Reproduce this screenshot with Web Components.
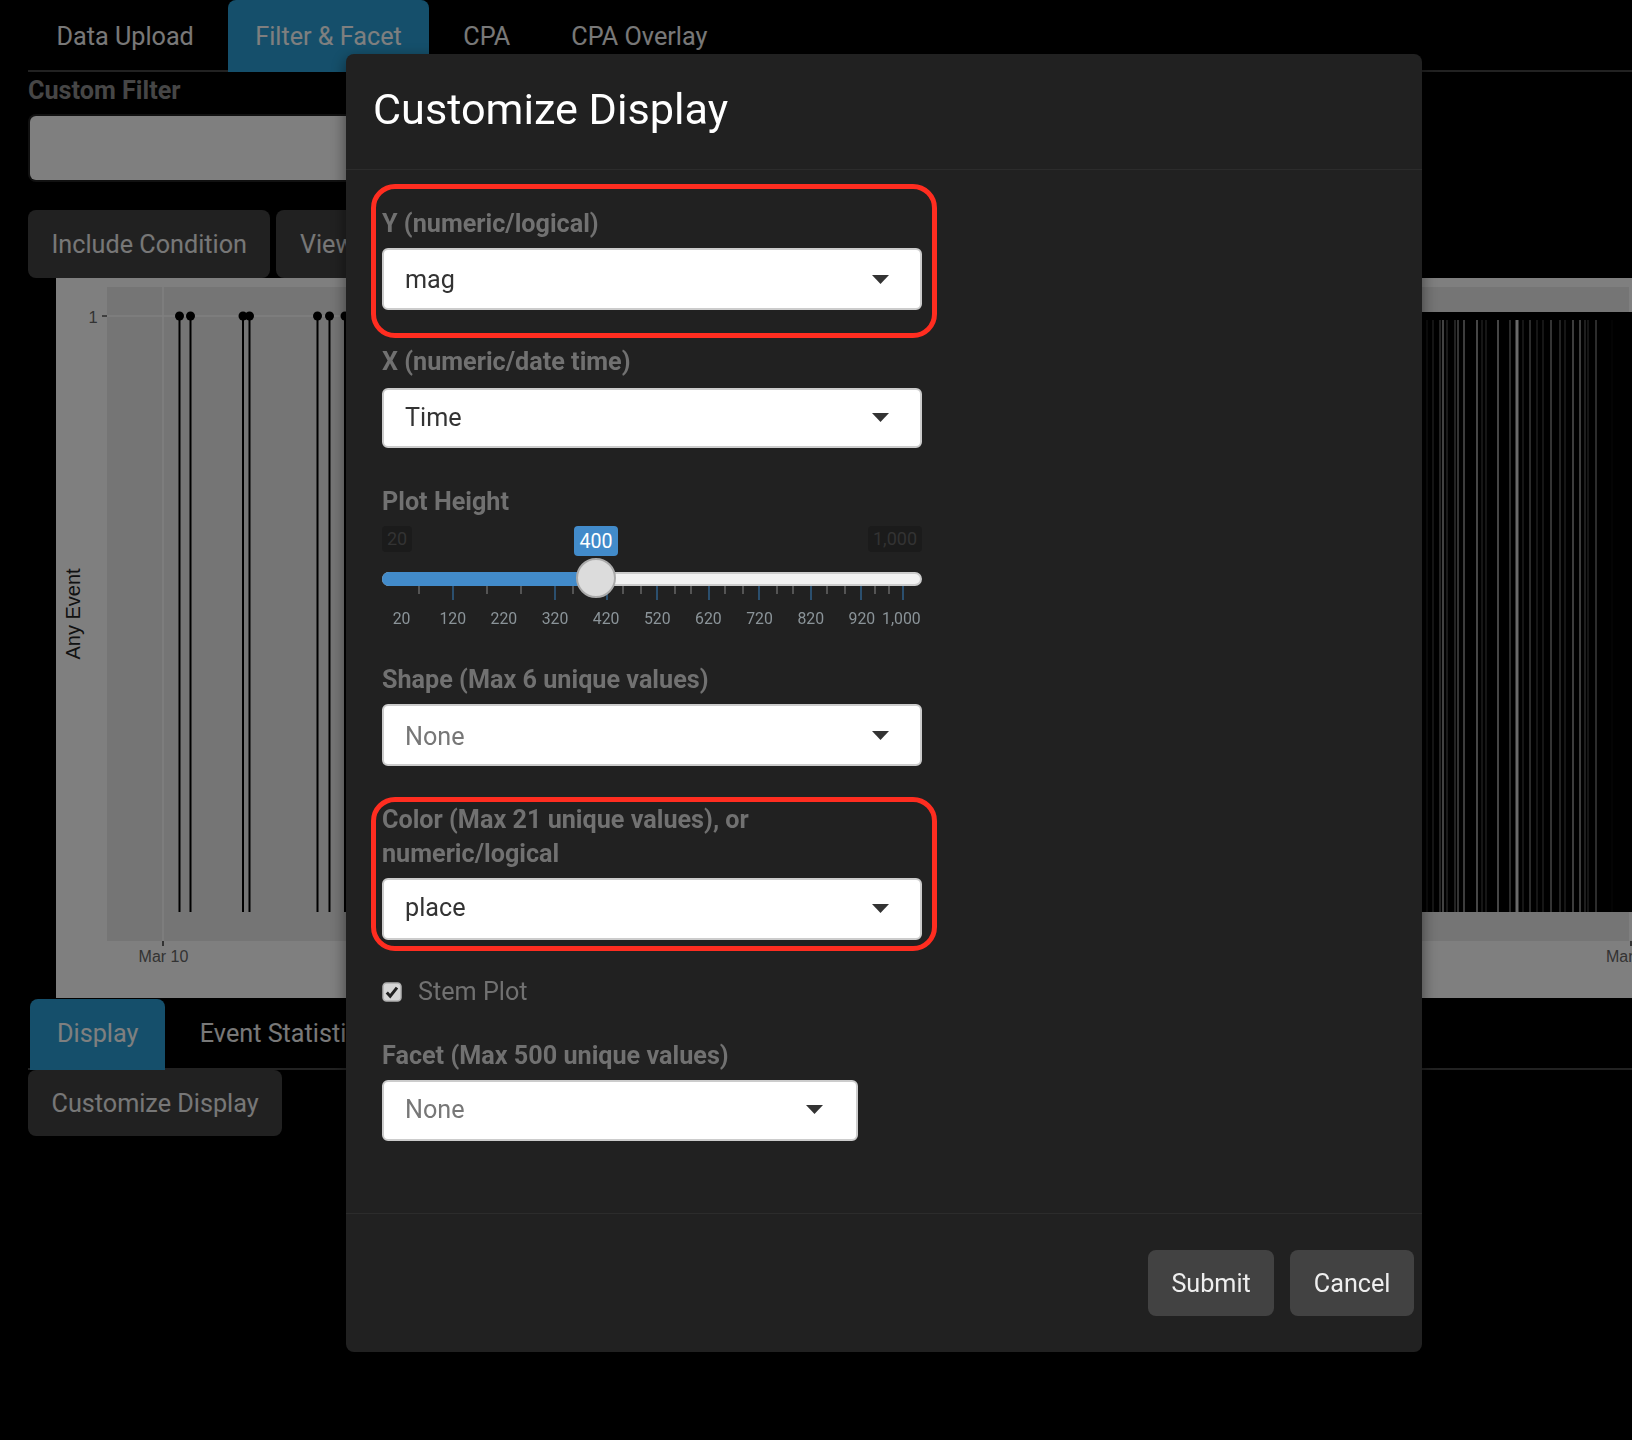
<!DOCTYPE html>
<html>
<head>
<meta charset="utf-8">
<title>Customize Display</title>
<style>
  html, body { margin: 0; height: 1440px; background: #000; overflow: hidden; }
  body { font-family: Roboto, "Liberation Sans", sans-serif; font-size: 25.2px; color: #eee; }
</style>
</head>
<body>
  <tab-bar>
    <tab-item>Data Upload</tab-item>
    <tab-item active>Filter &amp; Facet</tab-item>
    <tab-item>CPA</tab-item>
    <tab-item style="margin-left:-2px">CPA Overlay</tab-item>
  </tab-bar>
  <filter-box>Custom Filter</filter-box>
  <button-row style="--btn-h:68px;--btn-lh:70px">
    <dark-button>Include Condition</dark-button>
    <dark-button>View</dark-button>
  </button-row>
  <plot-panel></plot-panel>
  <tab-bar class="lower">
    <tab-item active>Display</tab-item>
    <tab-item>Event Statistics</tab-item>
  </tab-bar>
  <button-row><dark-button>Customize Display</dark-button></button-row>

  <modal-dialog title-text="Customize Display">
    <red-mark style="top:14px"></red-mark>
    <red-mark style="top:627px"></red-mark>
    <form-select style="margin-top:36px" value="mag" gap="8" height="62" text-nudge="1">Y (numeric/logical)</form-select>
    <form-select style="margin-top:34px" value="Time" gap="10" height="60" arrow-nudge="-1">X (numeric/date time)</form-select>
    <range-slider style="margin-top:36px">Plot Height</range-slider>
    <form-select style="margin-top:31px" value="None" muted gap="8" height="62" text-nudge="2">Shape (Max 6 unique values)</form-select>
    <form-select style="margin-top:35px;--label-pad:2px" value="place" gap="9" height="62" text-nudge="-1" arrow-nudge="-1">Color (Max 21 unique values), or numeric/logical</form-select>
    <check-box style="margin-top:35px">Stem Plot</check-box>
    <form-select style="margin-top:28px;width:476px;--label-pad:2px;--arrow-pad:33px" value="None" muted gap="9" height="61" text-nudge="-1" arrow-nudge="-1">Facet (Max 500 unique values)</form-select>
    <dark-button slot="footer">Submit</dark-button>
    <dark-button slot="footer">Cancel</dark-button>
  </modal-dialog>

<script>
const FONT = 'Roboto, "Liberation Sans", sans-serif';

class TabBar extends HTMLElement {
  constructor() {
    super();
    this.attachShadow({ mode: 'open' });
    this.shadowRoot.innerHTML = `
      <style>
        :host {
          display: flex;
          gap: 6px;
          height: 72px;
          margin-left: 28px;
          box-sizing: border-box;
          border-bottom: 2px solid #444;
        }
        :host(.lower) {
          --tab-h: 71px;
          --tab-lh: 70px;
          height: 71px;
          margin-top: 1px;
          padding-left: 2px;
        }
      </style>
      <slot></slot>
    `;
  }
}

class TabItem extends HTMLElement {
  constructor() {
    super();
    this.attachShadow({ mode: 'open' });
    this.shadowRoot.innerHTML = `
      <style>
        :host {
          display: block;
          height: var(--tab-h, 72px);
          padding: 0 28.5px;
          font: 25.2px/var(--tab-lh, 73px) ${FONT};
          color: #f0f0f0;
          white-space: nowrap;
        }
        :host([active]) {
          padding: 0 27px;
          background: #2a9fd6;
          color: #fff;
          border-radius: 8px 8px 0 0;
        }
      </style>
      <slot></slot>
    `;
  }
}

class FilterBox extends HTMLElement {
  constructor() {
    super();
    this.attachShadow({ mode: 'open' });
    this.shadowRoot.innerHTML = `
      <style>
        :host { display: block; margin-left: 28px; padding-top: 2px; font: 700 25.2px/34px ${FONT}; color: #8c8c8c; }
        .input {
          width: 1000px;
          height: 64px;
          margin: 8px 0 30px 2px;
          background: #fff;
          border-radius: 6px;
          box-shadow: 0 0 0 2px #222;
        }
      </style>
      <slot></slot>
      <div class="input"></div>
    `;
  }
}

class ButtonRow extends HTMLElement {
  constructor() {
    super();
    this.attachShadow({ mode: 'open' });
    this.shadowRoot.innerHTML = `
      <style>:host { display: flex; gap: 6px; margin-left: 28px; }</style>
      <slot></slot>
    `;
  }
}

class DarkButton extends HTMLElement {
  constructor() {
    super();
    this.attachShadow({ mode: 'open' });
    this.shadowRoot.innerHTML = `
      <style>
        :host {
          display: block;
          height: var(--btn-h, 66px);
          padding: 0 23.5px;
          font: 25.2px/var(--btn-lh, 68px) ${FONT};
          color: #eee;
          background: #424242;
          border-radius: 8px;
          white-space: nowrap;
        }
      </style>
      <slot></slot>
    `;
  }
}

class PlotPanel extends HTMLElement {
  constructor() {
    super();
    this.attachShadow({ mode: 'open' });
    // stems left of the dialog, and the gaps between the stems on the right
    const stems = [179.5, 190.5, 243, 249.5, 317.5, 329.5, 345];
    const gaps = [[1427, .15], [1433, .25], [1440, .4], [1443, .75], [1447, .3], [1455, .4], [1458, .6], [1464, .7],
      [1477, .8], [1482, .25], [1486, .25], [1498, .8], [1510, .5], [1517, .9, 3], [1523, .25], [1530, .5], [1537, .25],
      [1543, .25], [1551, .6], [1560, .4], [1565, .25], [1573, .7], [1580, .7], [1585, .35], [1588, .25], [1596, .5], [1612, .05]];
    const left = stems.map(x => `
      <line x1="${x}" y1="316" x2="${x}" y2="912" stroke="#000" stroke-width="2"/>
      <circle cx="${x}" cy="316" r="4.5" fill="#000"/>`).join('');
    const right = gaps.map(([x, o, w]) => `
      <line x1="${x}" y1="320" x2="${x}" y2="912" stroke="#ebebeb" stroke-width="${w || 1.5}" opacity="${o}"/>`).join('');
    this.shadowRoot.innerHTML = `
      <style>
        :host { display: block; height: 720px; margin-left: 56px; background: #fff; overflow: hidden; }
        svg { display: block; }
        text { font-family: "Liberation Sans", sans-serif; fill: #666; }
      </style>
      <svg width="1576" height="720" viewBox="56 278 1576 720">
        <rect x="107" y="287" width="1522" height="654" fill="#ebebeb"/>
        <line x1="107" y1="316" x2="1629" y2="316" stroke="#fff" stroke-width="1.5"/>
        <line x1="163" y1="287" x2="163" y2="941" stroke="#fff" stroke-width="1.5"/>
        <line x1="102" y1="316" x2="107" y2="316" stroke="#555" stroke-width="1.5"/>
        <line x1="163" y1="941" x2="163" y2="946" stroke="#333" stroke-width="1.5"/>
        <line x1="1631" y1="941" x2="1631" y2="946" stroke="#333" stroke-width="1.5"/>
        <text x="93" y="323" font-size="16.5" text-anchor="middle">1</text>
        <text x="163.5" y="962" font-size="16" text-anchor="middle">Mar 10</text>
        <text x="1606" y="962" font-size="16">Mar</text>
        <text x="0" y="0" font-size="20" text-anchor="middle" style="fill:#222" transform="translate(80,614) rotate(-90)">Any Event</text>
        ${left}
        <rect x="1340" y="312" width="292" height="600" fill="#000"/>
        ${right}
      </svg>
    `;
  }
}

class ModalDialog extends HTMLElement {
  constructor() {
    super();
    this.attachShadow({ mode: 'open' });
    this.shadowRoot.innerHTML = `
      <style>
        :host { display: block; }
        .backdrop { position: fixed; inset: 0; background: rgba(0, 0, 0, .5); }
        .box {
          position: fixed;
          left: 346px;
          top: 54px;
          width: 1076px;
          height: 1298px;
          display: flex;
          flex-direction: column;
          background: #212121;
          border-radius: 8px;
          box-shadow: 0 5px 15px rgba(0, 0, 0, .5);
        }
        header {
          height: 115px;
          padding-left: 27px;
          border-bottom: 1px solid #2c2c2c;
          font: 43.2px/112px ${FONT};
          color: #fff;
        }
        main { position: relative; flex: 1; padding-left: 36px; }
        footer {
          height: 138px;
          padding-right: 8px;
          display: flex;
          justify-content: flex-end;
          align-items: center;
          gap: 16px;
          border-top: 1px solid #2c2c2c;
        }
      </style>
      <div class="backdrop"></div>
      <div class="box">
        <header>${this.getAttribute('title-text')}</header>
        <main><slot></slot></main>
        <footer><slot name="footer"></slot></footer>
      </div>
    `;
  }
}

class RedMark extends HTMLElement {
  constructor() {
    super();
    this.attachShadow({ mode: 'open' });
    this.shadowRoot.innerHTML = `
      <style>
        :host {
          position: absolute;
          left: 25px;
          width: 566px;
          height: 154px;
          box-sizing: border-box;
          border: 5px solid #ff2d20;
          border-radius: 24px;
          pointer-events: none;
        }
      </style>
    `;
  }
}

class FormSelect extends HTMLElement {
  constructor() {
    super();
    this.attachShadow({ mode: 'open' });
    const muted = this.hasAttribute('muted');
    const textNudge = this.getAttribute('text-nudge') || 0;
    const arrowNudge = this.getAttribute('arrow-nudge') || 0;
    this.shadowRoot.innerHTML = `
      <style>
        :host { display: block; width: 540px; font: 700 25.2px/34px ${FONT}; color: #717171; }
        .label { padding-top: var(--label-pad, 1px); margin-bottom: calc(0px - var(--label-pad, 1px)); }
        .select {
          box-sizing: border-box;
          height: ${this.getAttribute('height')}px;
          margin-top: ${this.getAttribute('gap')}px;
          padding: 0 var(--arrow-pad, 31px) 0 21px;
          display: flex;
          align-items: center;
          justify-content: space-between;
          background: #fff;
          border: 2px solid #ccc;
          border-radius: 6px;
          font-weight: 400;
          color: ${muted ? '#777' : '#333'};
        }
        span { transform: translateY(${textNudge}px); }
        svg { display: block; transform: translateY(${arrowNudge}px); }
      </style>
      <div class="label"><slot></slot></div>
      <div class="select">
        <span>${this.getAttribute('value')}</span>
        <svg width="17" height="9" viewBox="0 0 17 9"><path d="M0 0H17L8.5 9Z" fill="#333"/></svg>
      </div>
    `;
  }
}

class RangeSlider extends HTMLElement {
  constructor() {
    super();
    this.attachShadow({ mode: 'open' });
    const minor = [419, 487, 521, 573, 623, 641, 675, 691, 725, 743, 777, 793, 827, 845, 875, 889];
    const major = [453, 555, 607, 657, 709, 759, 811, 861, 903];
    const ticks = minor.map(x => `<line x1="${x - 382}" y1="0" x2="${x - 382}" y2="8" stroke="#666" stroke-width="1.5"/>`).join('')
      + major.map(x => `<line x1="${x - 382}" y1="0" x2="${x - 382}" y2="14" stroke="#2f5f88" stroke-width="1.5"/>`).join('');
    const labels = ['20', '120', '220', '320', '420', '520', '620', '720', '820', '920']
      .map(t => `<span>${t}</span>`).join('');
    this.shadowRoot.innerHTML = `
      <style>
        :host { display: block; width: 540px; font: 700 25.2px/34px ${FONT}; color: #717171; }
        .label { padding-top: 1px; margin-bottom: -1px; }
        .slider { position: relative; margin-top: 8px; font-weight: 400; }
        .ends { display: flex; justify-content: space-between; height: 26px; }
        .ends span {
          padding: 0 5px;
          font-size: 18px;
          line-height: 26px;
          color: #333;
          background: #1b1b1b;
          border-radius: 4px;
        }
        .bubble {
          position: absolute;
          left: 192px;
          top: 0;
          width: 44px;
          height: 30px;
          text-align: center;
          font-size: 19.6px;
          line-height: 32px;
          color: #fff;
          background: #428bca;
          border-radius: 4px;
        }
        .track {
          height: 14px;
          margin-top: 20px;
          box-sizing: border-box;
          border: 2px solid #ccc;
          border-radius: 7px;
          background: #f2f2f2;
        }
        .fill {
          position: absolute;
          left: 0;
          top: 46px;
          width: 200px;
          height: 14px;
          background: #428bca;
          border-radius: 7px 0 0 7px;
        }
        .handle {
          position: absolute;
          left: 194px;
          top: 32px;
          width: 40px;
          height: 40px;
          box-sizing: border-box;
          background: #dcdcdc;
          border: 2px solid #aaa;
          border-radius: 50%;
        }
        svg { display: block; }
        .grid {
          display: flex;
          margin: 7px 0 0 -6px;
          font-size: 15.8px;
          line-height: 24px;
          color: #8b9499;
        }
        .grid span { width: 51.15px; text-align: center; flex: none; }
        .grid b { font-weight: 400; width: 42px; text-align: center; margin-left: -7px; flex: none; }
      </style>
      <div class="label"><slot></slot></div>
      <div class="slider">
        <div class="ends"><span>20</span><span>1,000</span></div>
        <div class="track"></div>
        <div class="fill"></div>
        <div class="handle"></div>
        <div class="bubble">400</div>
        <svg width="540" height="14">${ticks}</svg>
        <div class="grid">${labels}<b>1,000</b></div>
      </div>
    `;
  }
}

class CheckBox extends HTMLElement {
  constructor() {
    super();
    this.attachShadow({ mode: 'open' });
    this.shadowRoot.innerHTML = `
      <style>
        :host {
          display: flex;
          align-items: center;
          gap: 16px;
          height: 34px;
          font: 25.2px/34px ${FONT};
          color: #717171;
        }
        svg { display: block; }
      </style>
      <svg width="20" height="20" viewBox="0 0 20 20">
        <rect x="1" y="1" width="18" height="18" rx="3.5" fill="#d6d6d6" stroke="#b0b0b0" stroke-width="1.5"/>
        <path d="M4.8 10.5L8.2 14.2L15 5.6" fill="none" stroke="#222" stroke-width="3"/>
      </svg>
      <slot></slot>
    `;
  }
}

customElements.define('tab-bar', TabBar);
customElements.define('tab-item', TabItem);
customElements.define('filter-box', FilterBox);
customElements.define('button-row', ButtonRow);
customElements.define('dark-button', DarkButton);
customElements.define('plot-panel', PlotPanel);
customElements.define('modal-dialog', ModalDialog);
customElements.define('red-mark', RedMark);
customElements.define('form-select', FormSelect);
customElements.define('range-slider', RangeSlider);
customElements.define('check-box', CheckBox);
</script>
</body>
</html>
